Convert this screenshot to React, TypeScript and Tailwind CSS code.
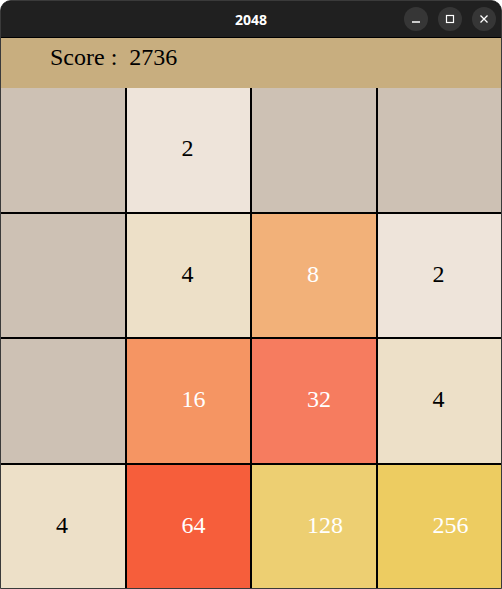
import React from "react";

const grid: number[][] = [
  [0, 2, 0, 0],
  [0, 4, 8, 2],
  [0, 16, 32, 4],
  [4, 64, 128, 256],
];

const bg: Record<number, string> = {
  0: "bg-[#cdc1b4]",
  2: "bg-[#eee4da]",
  4: "bg-[#ede0c8]",
  8: "bg-[#f2b179]",
  16: "bg-[#f59563]",
  32: "bg-[#f67c5f]",
  64: "bg-[#f65e3b]",
  128: "bg-[#edcf72]",
  256: "bg-[#edcc61]",
};

export default function App() {
  return (
    <div className="w-[502px] h-[589px] bg-white">
      <div className="w-[502px] h-[589px] flex flex-col border border-[#3a3a3a] rounded-t-[11px] overflow-hidden bg-black">
        <div className="h-[36px] shrink-0 bg-[#202020] relative flex items-center justify-center">
          <span
            className="text-white text-[14px] font-bold"
            style={{ fontFamily: '"Noto Sans", "Open Sans", sans-serif' }}
          >
            2048
          </span>
          <div className="absolute right-[5px] top-[6px] flex gap-[10px]">
            <div className="w-[24px] h-[24px] rounded-full bg-[#363636] flex items-center justify-center">
              <svg width="10" height="10" viewBox="0 0 10 10">
                <line x1="1" y1="8" x2="9" y2="8" stroke="white" strokeWidth="1.3" />
              </svg>
            </div>
            <div className="w-[24px] h-[24px] rounded-full bg-[#363636] flex items-center justify-center">
              <svg width="10" height="10" viewBox="0 0 10 10">
                <rect x="1.5" y="1.5" width="7" height="7" fill="none" stroke="white" strokeWidth="1.2" />
              </svg>
            </div>
            <div className="w-[24px] h-[24px] rounded-full bg-[#363636] flex items-center justify-center">
              <svg width="10" height="10" viewBox="0 0 10 10">
                <path d="M1.5 1.5 L8.5 8.5 M8.5 1.5 L1.5 8.5" stroke="white" strokeWidth="1.3" />
              </svg>
            </div>
          </div>
        </div>
        <div className="h-[1px] shrink-0 bg-black" />
        <div
          className="h-[50px] shrink-0 bg-[#c8ae7f] pl-[49px] pt-[5px] text-[24px] leading-[28px] text-black whitespace-pre"
          style={{ fontFamily: '"Liberation Serif", "Times New Roman", serif' }}
        >
          Score :  2736
        </div>
        <div
          className="flex-1 grid grid-cols-4 grid-rows-4 gap-[2px] bg-black"
          style={{ fontFamily: '"Liberation Serif", "Times New Roman", serif' }}
        >
          {grid.flat().map((v, i) => (
            <div
              key={i}
              className={`${bg[v]} flex items-center pl-[55px] pb-[3px] text-[24px] leading-[28px] ${
                v >= 8 ? "text-white" : "text-black"
              }`}
            >
              {v ? v : ""}
            </div>
          ))}
        </div>
      </div>
    </div>
  );
}
